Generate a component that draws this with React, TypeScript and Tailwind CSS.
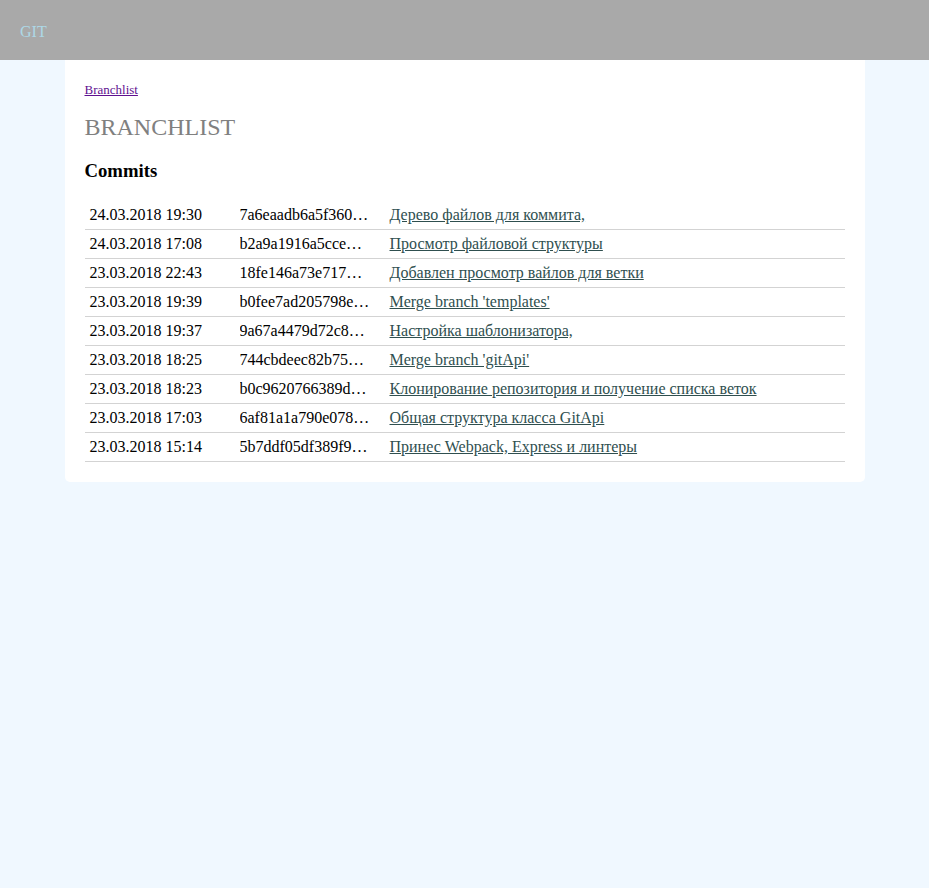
import React from 'react';

type Commit = {
  date: string;
  hash: string;
  message: string;
};

const commits: Commit[] = [
  { date: '24.03.2018 19:30', hash: '7a6eaadb6a5f360c1d2e4b8a9f0e3c7d5b2a1e4f', message: 'Дерево файлов для коммита,' },
  { date: '24.03.2018 17:08', hash: 'b2a9a1916a5cce3f7d2b8e0a4c6f1d9e3b5a7c2d', message: 'Просмотр файловой структуры' },
  { date: '23.03.2018 22:43', hash: '18fe146a73e7174b2c9d0e5f8a3b6c1d4e7f2a9b', message: 'Добавлен просмотр вайлов для ветки' },
  { date: '23.03.2018 19:39', hash: 'b0fee7ad205798e3c1a4d6f9b2e5a8c0d3f6b1e4', message: "Merge branch 'templates'" },
  { date: '23.03.2018 19:37', hash: '9a67a4479d72c8b1e3f5a7c9d0b2e4f6a8c1d3e5', message: 'Настройка шаблонизатора,' },
  { date: '23.03.2018 18:25', hash: '744cbdeec82b75a1d3e5f7b9c0a2d4f6e8b1c3a5', message: "Merge branch 'gitApi'" },
  { date: '23.03.2018 18:23', hash: 'b0c9620766389d4a2e6f8b0c1d3e5a7f9b2c4d6e', message: 'Клонирование репозитория и получение списка веток' },
  { date: '23.03.2018 17:03', hash: '6af81a1a790e078c3b5d7f9a1c2e4b6d8f0a3c5e', message: 'Общая структура класса GitApi' },
  { date: '23.03.2018 15:14', hash: '5b7ddf05df389f9a2c4e6b8d0f1a3c5e7b9d2f4a', message: 'Принес Webpack, Express и линтеры' },
];

const App = () => {
  return (
    <div className="min-h-screen bg-[#f0f8ff] font-['Liberation_Serif','Times_New_Roman',serif] text-black">
      {/* Header */}
      <div className="h-[60px] bg-[#a9a9a9] px-[20px] pt-[20px]">
        <span className="text-[16px] leading-[18px] text-[#add8e6]">GIT</span>
      </div>

      {/* Main content */}
      <div className="mx-auto w-[800px] rounded-b-[5px] bg-white px-[20px] pb-[20px] pt-[22px]">
        <a href="#" className="block text-[13px] leading-[15px] text-[#5f1190] underline">
          Branchlist
        </a>

        <h2 className="mt-[16px] text-[24px] leading-[28px] text-[#808080]">BRANCHLIST</h2>

        <h3 className="mt-[19px] text-[18.72px] font-bold leading-[22px]">Commits</h3>

        <div className="mt-[19px] flex flex-col">
          {commits.map((commit) => (
            <div key={commit.hash} className="flex border-b border-[#d3d3d3] text-[16px] leading-[18px]">
              <div className="w-[150px] shrink-0 px-[5px] py-[5px]">{commit.date}</div>
              <div className="w-[150px] shrink-0 py-[5px] pl-[5px] pr-[15px]">
                <div className="truncate">{commit.hash}</div>
              </div>
              <div className="min-w-0 flex-1 px-[5px] py-[5px]">
                <a href="#" className="text-[#2f4f4f] underline">
                  {commit.message}
                </a>
              </div>
            </div>
          ))}
        </div>
      </div>
    </div>
  );
};

export default App;
